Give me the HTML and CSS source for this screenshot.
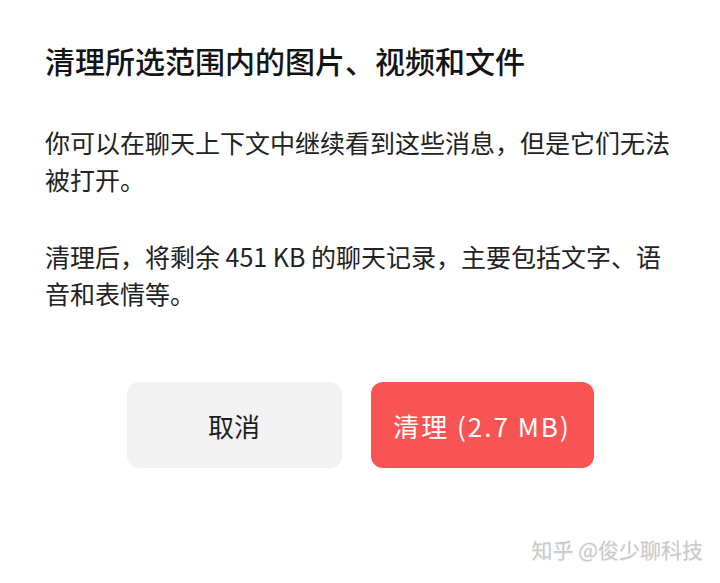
FILE: index.html
```html
<!DOCTYPE html>
<html lang="zh-CN">
<head>
    <meta charset="UTF-8">
    <meta name="viewport" content="width=device-width, initial-scale=1.0">
    <title>清理</title>
    <link rel="stylesheet" href="styles.css">
</head>
<body>
    <div class="dialog">
        <h1 class="dialog-title">清理所选范围内的图片、视频和文件</h1>
        <p class="dialog-text">你可以在聊天上下文中继续看到这些消息，但是它们无法被打开。</p>
        <p class="dialog-text">清理后，将剩余 451 KB 的聊天记录，主要包括文字、语音和表情等。</p>
        <div class="dialog-actions">
            <button class="btn btn-cancel">取消</button>
            <button class="btn btn-danger">清理 (2.7 MB)</button>
        </div>
    </div>
    <div class="watermark">知乎 @俊少聊科技</div>
</body>
</html>
```

FILE: styles.css
```css
body {
    margin: 0;
    background-color: #ffffff;
    font-family: "Noto Sans CJK SC", "Noto Sans", sans-serif;
    color: #1b1b1b;
    position: relative;
    height: 583px;
    overflow: hidden;
}
.dialog {
    padding: 40px 45px 0;
}
.dialog-title {
    margin: 0 0 44px;
    font-size: 30px;
    line-height: 40px;
    font-weight: 500;
    color: #141414;
}
.dialog-text {
    margin: 0 0 40px;
    font-size: 25px;
    line-height: 37px;
    color: #222;
}
.dialog-actions {
    display: flex;
    justify-content: center;
    gap: 29px;
    margin-top: 70px;
}
.btn {
    height: 86px;
    border: none;
    border-radius: 12px;
    font-family: inherit;
    font-size: 26px;
    cursor: pointer;
}
.btn-cancel {
    width: 215px;
    background-color: #f2f2f2;
    color: #1e1e1e;
}
.btn-danger {
    width: 223px;
    background-color: #f95454;
    color: #ffffff;
    letter-spacing: 2px;
}
.watermark {
    position: absolute;
    right: 17px;
    bottom: 19px;
    font-size: 21px;
    color: #cacaca;
    text-shadow: 0 1px 1px rgba(0,0,0,0.08);
}
```
